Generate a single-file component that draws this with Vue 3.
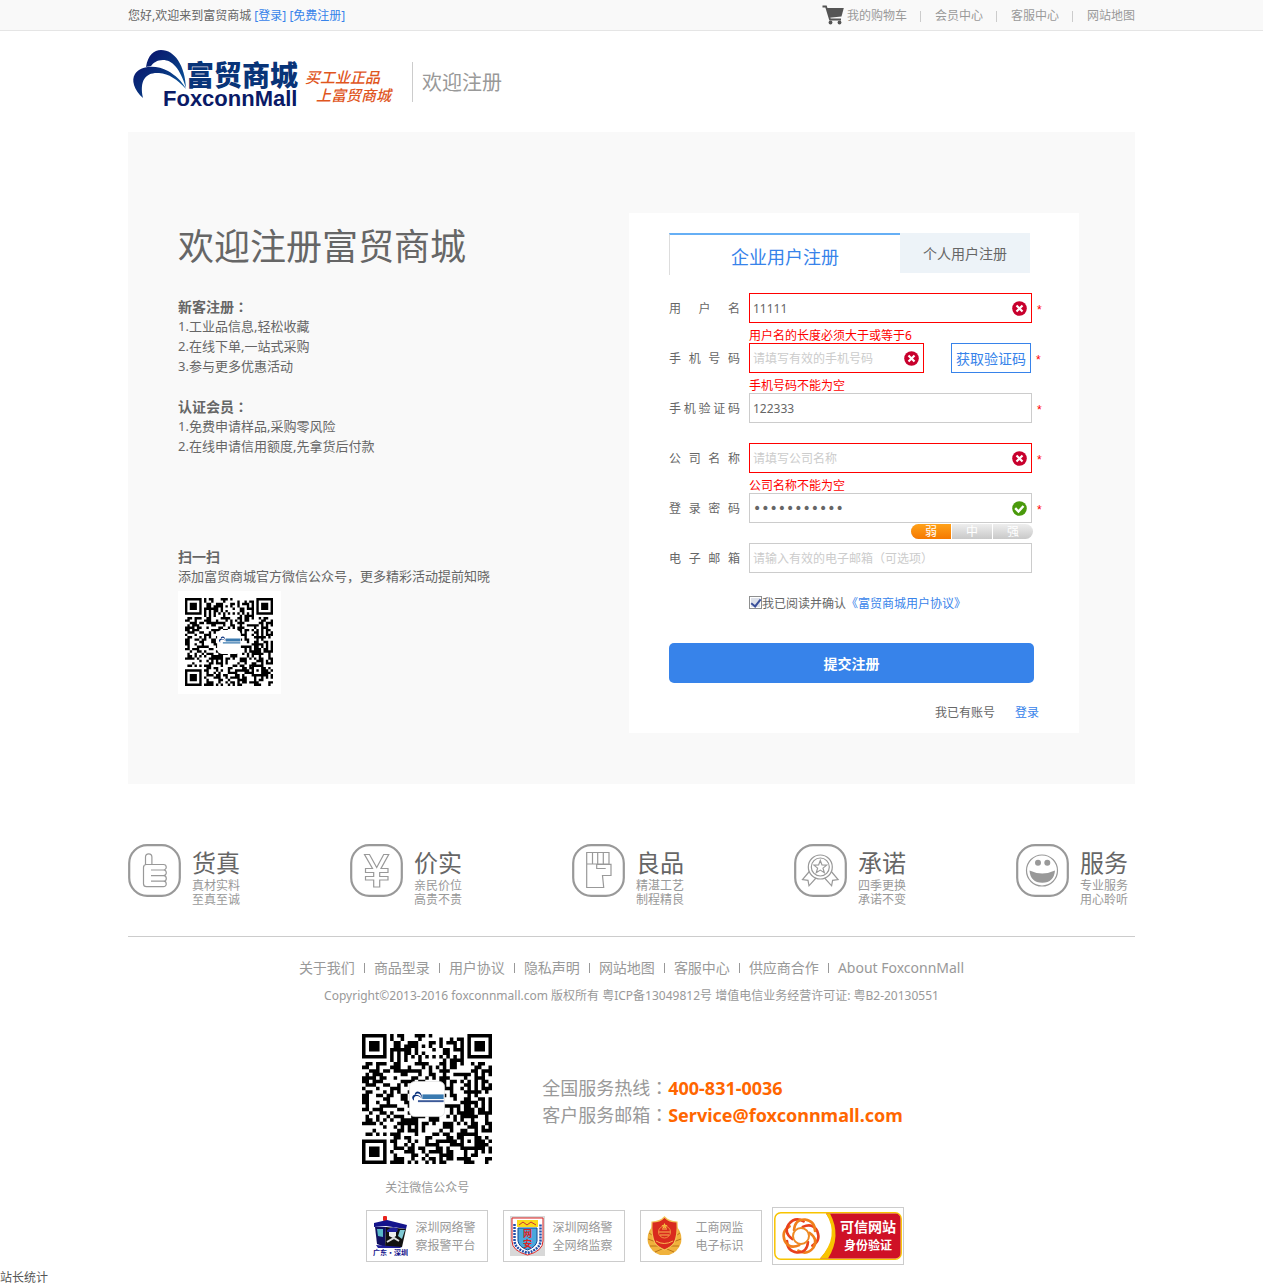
<script setup>
import { ref, reactive } from 'vue'

const topLinks = ['我的购物车', '会员中心', '客服中心', '网站地图']

const fields = reactive([
  { id: 'username', label: '用户名', type: 'text', value: '11111', hint: '', error: '用户名的长度必须大于或等于6', status: 'bad', required: true },
  { id: 'phone', label: '手机号码', type: 'text', value: '', hint: '请填写有效的手机号码', error: '手机号码不能为空', status: 'bad', required: true, code: true },
  { id: 'captcha', label: '手机验证码', type: 'text', value: '122333', hint: '', error: '', status: '', required: true },
  { id: 'company', label: '公司名称', type: 'text', value: '', hint: '请填写公司名称', error: '公司名称不能为空', status: 'bad', required: true },
  { id: 'password', label: '登录密码', type: 'password', value: 'foxconn2016', hint: '', error: '', status: 'good', required: true, strength: true },
  { id: 'email', label: '电子邮箱', type: 'text', value: '', hint: '请输入有效的电子邮箱（可选项）', error: '', status: '', required: false }
])

const agreed = ref(true)

const features = [
  {
    title: '货真', lines: ['真材实料', '至真至诚'],
    paths: ['M17.5 20.5V13a3.2 3.2 0 0 1 6.4 0v7.5H35.5a2.7 2.7 0 0 1 0 5.5a2.8 2.8 0 0 1 0 5.6a2.8 2.8 0 0 1 0 5.6a2.7 2.7 0 0 1 0 5.5H18.5a3 3 0 0 1-3-3V23.5a3 3 0 0 1 3-3H24M23 26H36M23 31.6H36M23 37.2H36']
  },
  {
    title: '价实', lines: ['亲民价位', '高贵不贵'],
    paths: ['M14.500 10.500h5L26.700 23.500 33.700 10.500h5L31 24.500h7v4h-8.300v4H38v3.500h-8.300v7h-6v-7h-8.200v-3.500h8.200v-4h-8.200v-4h7z']
  },
  {
    title: '良品', lines: ['精湛工艺', '制程精良'],
    paths: ['M14.700 8.500H37V20H14.700zM20.500 8.500V20M25.700 8.500V20M31.300 8.500V20M14.700 20V43.500H31.700L30.500 31.500H39V20.300H24.700V24.500H33.700']
  },
  {
    title: '承诺', lines: ['四季更换', '承诺不变'],
    paths: [
      'M38.300 23a12 12 0 1 1-24 0a12 12 0 1 1 24 0zM35.300 23a9 9 0 1 1-18 0a9 9 0 1 1 18 0z',
      'M26.300 16.500l1.700 4.400 4.700.2-3.700 3 1.300 4.600-4-2.600-4 2.600 1.300-4.600-3.700-3 4.700-.2z',
      'M15.300 27.500L8.500 35.500l5.500.8 1 5.500 7-7.800M37.300 27.500l6.800 8-5.500.8-1 5.500-7-7.800'
    ]
  },
  {
    title: '服务', lines: ['专业服务', '用心聆听'],
    paths: ['M41.500 26.500a15.500 15.500 0 1 1-31 0a15.500 15.500 0 1 1 31 0z'],
    solid: 'M25 18.700a3 3 0 1 1-6 0a3 3 0 1 1 6 0zM34.300 18.700a3 3 0 1 1-6 0a3 3 0 1 1 6 0zM13.500 26.500q12.700 6 25.500 0q-1 12-12.700 12.300q-12-.3-12.800-12.300z'
  }
]

const footLinks = ['关于我们', '商品型录', '用户协议', '隐私声明', '网站地图', '客服中心', '供应商合作', 'About FoxconnMall']

/* 37×37 module grid: finder, alignment and timing patterns plus data cells */
function qrPath() {
  const n = 37
  let seed = 20130551
  const next = () => {
    seed = (seed * 1103515245 + 12345) % 2147483648
    return seed / 2147483648
  }
  const ring = (x, y, cx, cy) => Math.max(Math.abs(x - cx), Math.abs(y - cy))
  let d = ''
  for (let y = 0; y < n; y++) {
    for (let x = 0; x < n; x++) {
      let on = next() < 0.5
      if (x === 6) on = y % 2 === 0
      if (y === 6) on = x % 2 === 0
      const a = ring(x, y, 30, 30)
      if (a <= 2) on = a !== 1
      for (const [cx, cy] of [[3, 3], [33, 3], [3, 33]]) {
        const r = ring(x, y, cx, cy)
        if (r <= 4) on = r === 3 || r <= 1
      }
      if (on) d += `M${x} ${y}h1v1h-1z`
    }
  }
  return d
}
const qr = qrPath()

const arcs = 'M18 20C20 8 26 3 33 3C47 3 57 19 58 41C52 21 44 13 35 13C29 13 25 16 23 19C21 19 19 20 18 20zM15 51C6 43 3 33 7 27C13 18 29 18 40 24C47 28 54 34 58 42C49 32 41 27 31 26C18 25 11 33 15 51z'
</script>

<template>
  <div class="page">
    <div class="topbar">
      <div class="wrap topbar-in">
        <p class="hello">您好,欢迎来到富贸商城 <a href="#">[登录]</a> <a href="#">[免费注册]</a></p>
        <nav class="topnav">
          <a v-for="(t, i) in topLinks" :key="t" href="#">
            <svg v-if="i === 0" class="cart" viewBox="0 0 22 20" width="22" height="20">
              <path d="M.5 1.500H4L8 14.500H19" fill="none" stroke="#555" stroke-width="1.800" />
              <path d="M4.500 3H21.800L19.500 11.500 7.300 12.800z" fill="#555" />
              <circle cx="8.500" cy="17.500" r="1.900" fill="#555" /><circle cx="17.500" cy="17.500" r="1.900" fill="#555" />
            </svg>{{ t }}</a>
        </nav>
      </div>
    </div>

    <header class="wrap header">
      <a href="#" class="logo" aria-label="FoxconnMall">
        <svg viewBox="0 0 270 64" width="270" height="64">
          <defs>
            <linearGradient id="navy" x1="0" y1="0" x2="1" y2="1">
              <stop offset="0" stop-color="#0a0a66" /><stop offset=".5" stop-color="#08307c" /><stop offset="1" stop-color="#0b62a8" />
            </linearGradient>
          </defs>
          <path :d="arcs" fill="url(#navy)" />
          <text x="58" y="39" class="logo-cn">富贸商城</text>
          <text x="35" y="59" class="logo-en">FoxconnMall</text>
          <text x="177" y="36" class="slogan">买工业正品</text>
          <text x="188" y="54" class="slogan">上富贸商城</text>
        </svg>
      </a>
      <h2>欢迎注册</h2>
    </header>

    <main class="wrap panel">
      <section class="intro">
        <h1>欢迎注册富贸商城</h1>
        <h3>新客注册<span class="mid">：</span></h3>
        <p>1.工业品信息,轻松收藏</p>
        <p>2.在线下单,一站式采购</p>
        <p>3.参与更多优惠活动</p>
        <h3 class="second">认证会员<span class="mid">：</span></h3>
        <p>1.免费申请样品,采购零风险</p>
        <p>2.在线申请信用额度,先拿货后付款</p>
        <h3 class="scan">扫一扫</h3>
        <p>添加富贸商城官方微信公众号，更多精彩活动提前知晓</p>
        <div class="qr-small">
          <svg viewBox="0 0 37 37" width="88" height="88">
            <path :d="qr" />
            <rect x="13.500" y="13.500" width="10" height="10" rx="2" fill="#fff" />
            <g transform="translate(14 16) scale(.055)">
              <path :d="arcs" fill="#08307c" /><path d="M58 18H168V42H58zM35 48H168V56H35z" fill="#3a7ab0" />
            </g>
          </svg>
        </div>
      </section>

      <form class="card" @submit.prevent>
        <div class="tabs">
          <button type="button" class="tab on">企业用户注册</button>
          <button type="button" class="tab">个人用户注册</button>
        </div>

        <div v-for="f in fields" :key="f.id" class="row">
          <label :for="f.id">{{ f.label }}</label>
          <div class="line">
            <div class="box" :class="[f.status, { short: f.code }]">
              <input :id="f.id" v-model="f.value" :type="f.type" :placeholder="f.hint" autocomplete="off" />
              <svg v-if="f.status" class="mark" viewBox="0 0 15 15" width="15" height="15">
                <circle cx="7.500" cy="7.500" r="7.300" :fill="f.status === 'bad' ? '#c8002d' : '#4a9a0c'" />
                <path v-if="f.status === 'bad'" d="M4.500 4.500l6 6M10.500 4.500l-6 6" stroke="#fff" stroke-width="2.200" fill="none" />
                <path v-else d="M3.200 7.200l3.300 3.300 5-5.500" stroke="#fff" stroke-width="2.400" fill="none" />
              </svg>
            </div>
            <button v-if="f.code" type="button" class="get-code">获取验证码</button>
            <span v-if="f.required" class="star">*</span>
          </div>
          <p v-if="f.error" class="error">{{ f.error }}</p>
          <div v-if="f.strength" class="strength"><span class="weak">弱</span><span>中</span><span>强</span></div>
        </div>

        <div class="agree">
          <input id="agree" v-model="agreed" type="checkbox" /><label for="agree">我已阅读并确认</label><a href="#">《富贸商城用户协议》</a>
        </div>
        <button type="submit" class="submit">提交注册</button>
        <p class="have">我已有账号<a href="#">登录</a></p>
      </form>
    </main>

    <section class="wrap features">
      <div v-for="f in features" :key="f.title" class="feature">
        <svg viewBox="0 0 53 53" width="53" height="53">
          <rect x="1.200" y="1.200" width="50.600" height="50.600" rx="18" fill="none" stroke="#999" stroke-width="2.200" />
          <path v-for="p in f.paths" :key="p" :d="p" fill="none" stroke="#999" stroke-width="1.200" />
          <path v-if="f.solid" :d="f.solid" fill="#999" />
        </svg>
        <div>
          <h4>{{ f.title }}</h4>
          <p v-for="l in f.lines" :key="l">{{ l }}</p>
        </div>
      </div>
    </section>

    <footer>
      <nav class="footnav"><a v-for="l in footLinks" :key="l" href="#">{{ l }}</a></nav>
      <p class="copy">Copyright©2013-2016 foxconnmall.com 版权所有 粤ICP备13049812号 增值电信业务经营许可证: 粤B2-20130551</p>

      <div class="contact">
        <div class="follow">
          <svg viewBox="0 0 37 37" width="130" height="130">
            <path :d="qr" />
            <rect x="13.500" y="13.500" width="10" height="10" rx="1.500" fill="#fff" stroke="#ddd" stroke-width=".2" />
            <g transform="translate(14 16.200) scale(.055)">
              <path :d="arcs" fill="#08307c" />
              <path d="M58 18H168V42H58z" fill="#3a7ab0" /><path d="M35 48H168V58H35z" fill="#3c5a98" />
            </g>
          </svg>
          <p>关注微信公众号</p>
        </div>
        <div class="hotline">
          <p>全国服务热线<span class="mid">：</span><b>400-831-0036</b></p>
          <p>客户服务邮箱<span class="mid">：</span><b>Service@foxconnmall.com</b></p>
        </div>
      </div>

      <div class="badges">
        <a href="#" class="badge">
          <svg viewBox="0 0 35 40" width="35" height="40">
            <rect x="10" y="0" width="4" height="5" rx="1" fill="#e8231c" />
            <path d="M1 7L14 4 34 9 33 13 13 10 1 11z" fill="#14148c" />
            <path d="M2 11L13 11 12 31 4 28z" fill="#101060" /><path d="M4 13l6 0 0 8-5-1z" fill="#58b8c8" />
            <path d="M13 11L33 13 29 31 12 31z" fill="#111" /><path d="M27 14l5 0-3 9-4-3z" fill="#7fc8d4" />
            <path d="M14 14q6-5 11-1l-1 3H14z" fill="#20209a" /><path d="M16 16h7v4l-3 2-4-2z" fill="#eee" />
            <path d="M14 26l7-4 5 3" fill="none" stroke="#ddd" stroke-width="2" />
            <path d="M3 29l26 2-2 1H5z" fill="#20209a" />
            <text x="0" y="39" class="tiny-navy">广东·深圳</text>
          </svg>
          <span>深圳网络警<br />察报警平台</span>
        </a>
        <a href="#" class="badge">
          <svg viewBox="0 0 35 40" width="35" height="40">
            <rect width="35" height="40" fill="#d8d8d8" />
            <path d="M2 2H33V25Q33 35 17.500 39Q2 35 2 25z" fill="#fff" stroke="#d22" stroke-width="1" />
            <path d="M4.500 8V25Q5 33 17.500 37Q30 33 30.500 25V8" fill="none" stroke="#2350a8" stroke-width="2.500" stroke-dasharray="2 1" />
            <rect x="7" y="4" width="21" height="7" fill="#fbdc18" /><path d="M9 9l4-3 4 3 4-3 5 3" fill="none" stroke="#c33" />
            <path d="M8 12H27V25Q26 31 17.500 34Q9 31 8 25z" fill="#4aa8dc" stroke="#124a94" />
            <text x="13" y="21" class="tiny-red">网</text><text x="13" y="31" class="tiny-red">安</text>
          </svg>
          <span>深圳网络警<br />全网络监察</span>
        </a>
        <a href="#" class="badge gap">
          <svg viewBox="0 0 35 40" width="35" height="40">
            <path d="M7 9Q-1 16 1 27Q4 36 13 39H22Q31 36 34 27Q36 16 28 9z" fill="#f0b23c" />
            <path d="M2 17l6 4M1 23l8 3M3 30l8 0M8 36l7-3M33 17l-6 4M34 23l-8 3M32 30l-8 0M27 36l-7-3" stroke="#b8741a" fill="none" />
            <path d="M17.500 1Q22 6 30 6Q31 20 27 27Q24 31 17.500 34Q11 31 8 27Q4 20 5 6Q13 6 17.500 1z" fill="#d92a1e" stroke="#f4c55a" stroke-width="1.200" />
            <path d="M17.500 7l1 2 2 0-1.500 1.500.5 2-2-1-2 1 .5-2L14.500 9l2 0z" fill="#f8c840" />
            <circle cx="17.500" cy="16" r="6" fill="none" stroke="#f09040" /><path d="M12 16h11M13 19h9M15 13h5M9 25q8 5 17 0" stroke="#f8b850" fill="none" />
          </svg>
          <span>工商网监<br />电子标识</span>
        </a>
        <a href="#" class="badge trust">
          <svg viewBox="0 0 128 48" width="128" height="48">
            <rect x=".8" y=".8" width="126.400" height="46.400" rx="6" fill="#fff" stroke="#f8c400" stroke-width="1.500" />
            <path d="M52 1.500H121a5 5 0 0 1 5.500 5V41a5 5 0 0 1-5.500 5.500H46Q68 24 52 1.500z" fill="#cf1126" />
            <path d="M52 1.500Q66 24 46 46.500H54Q68 24 56 1.500z" fill="#f8c400" />
            <g fill="none" stroke-width="2.600" stroke-linecap="round">
              <path v-for="a in 6" :key="a" d="M20 18Q21 7 31 7.500Q41 9 41 19" :transform="`rotate(${a * 60} 27 24)`" :stroke="a % 2 ? '#e8401c' : '#f0801c'" />
            </g>
            <circle cx="27" cy="24" r="8" fill="#fff" stroke="#ee8a24" stroke-width="2" />
            <text x="66" y="20" class="trust-a">可信网站</text><text x="70" y="38" class="trust-b">身份验证</text>
          </svg>
        </a>
      </div>
    </footer>
    <a href="#" class="stat">站长统计</a>
  </div>
</template>

<style>
body { margin: 0; background: #fff; }
</style>

<style scoped>
.page, .page button, .page input { font-family: "Noto Sans", "Noto Sans CJK SC", sans-serif; }
.page { font-size: 12px; line-height: 20px; color: #666; }
.page * { box-sizing: border-box; }
p, h1, h2, h3, h4 { margin: 0; }
a { color: #3783ea; text-decoration: none; }
svg { display: block; flex: none; }
button { padding: 0; cursor: pointer; }
.wrap { max-width: 1007px; margin: 0 auto; }
.mid { font-family: "Noto Sans CJK TC", sans-serif; line-height: 1; }

.topbar { background: #f9f9f9; border-bottom: 1px solid #e5e5e5; }
.topbar-in { display: flex; justify-content: space-between; align-items: center; height: 30px; padding-top: 2px; }
.topnav { display: flex; align-items: center; }
.topnav a { display: flex; align-items: center; color: #999; }
.topnav a + a::before { content: ""; width: 1px; height: 11px; margin: 0 14px 0 13px; background: #ccc; }
.cart { margin: 0 3px 2px 0; }

.header { display: flex; align-items: center; height: 101px; }
.logo { margin: 0 14px 6px 0; }
.header h2 { height: 40px; padding-left: 9px; border-left: 1px solid #ccc; font-size: 20px; font-weight: 400; line-height: 42px; color: #999; }
.logo-cn { font: 900 28px "Noto Sans CJK SC", sans-serif; fill: #083478; }
.logo-en { font: 700 22px "Liberation Sans", sans-serif; fill: #0a1a66; }
.slogan { font: italic 500 15px "Noto Sans CJK SC", sans-serif; fill: #e0561e; }

.panel { display: flex; justify-content: space-between; align-items: flex-start; padding: 81px 56px 51px 50px; background: #f9f9f9; }
.intro h1 { margin: 9px 0 25px; font-size: 36px; line-height: 50px; font-weight: 400; }
.intro h3 { font-size: 14px; line-height: 20px; font-weight: 700; }
.intro p { padding-bottom: 2px; font-size: 13px; line-height: 18px; }
.intro .second { margin-top: 20px; }
.intro .scan { margin-top: 90px; }
.qr-small { display: inline-block; margin-top: 4px; padding: 7px 8px 8px 7px; background: #fff; }

.card { width: 450px; padding: 20px 39px 11px 40px; background: #fff; }
.tabs { display: flex; align-items: flex-start; margin-bottom: 18px; }
.tab { width: 130px; height: 40px; border: 0; background: #edf3f8; color: #666; font-size: 14px; }
.tab.on { width: 231px; height: 42px; padding-top: 2px; border-top: 2px solid #66aff5; border-left: 1px solid #ddd; background: #fff; color: #3783ea; font-size: 18px; }
.row { display: grid; grid-template-columns: 71px 1fr; column-gap: 9px; grid-template-rows: 30px 20px; }
.row label { line-height: 32px; text-align: justify; text-align-last: justify; }
.line { display: flex; align-items: center; }
.box { display: flex; align-items: center; width: 283px; height: 30px; padding-right: 4px; border: 1px solid #ccc; background: #fff; }
.box.short { width: 175px; }
.box.bad { border-color: #f00; }
.box input { flex: 1; min-width: 0; height: 28px; padding: 0 3px; border: 0; outline: 0; background: none; color: #666; font-size: 12px; }
.box input[type="password"] { font-family: "DejaVu Sans", sans-serif; font-size: 14px; }
.box input::placeholder { color: #ccc; }
.get-code { width: 80px; height: 30px; margin-left: 27px; border: 1px solid #3783ea; background: #fff; color: #3783ea; font-size: 14px; }
.star { margin-left: 5px; padding-top: 4px; color: #f00; font-family: "Liberation Sans", sans-serif; }
.error { grid-column: 2; padding-top: 5px; line-height: 16px; color: #f00; }
.strength { grid-column: 2; display: flex; width: 122px; height: 15px; margin: 1px 0 0 162px; border-radius: 8px; overflow: hidden; background: linear-gradient(#eee, #c8c8c8); }
.strength span { flex: 1; line-height: 15px; text-align: center; color: #fff; }
.strength span + span { border-left: 1px solid #fff; }
.strength .weak { background: linear-gradient(#ffa21a, #f57800); }
.agree { display: flex; align-items: center; height: 20px; margin: 0 0 30px 80px; padding-top: 2px; }
.agree input { appearance: none; display: flex; justify-content: center; width: 13px; height: 13px; margin: 0 0 4px; border: 1px solid #8e8f8f; background: #dde1ea; box-shadow: inset 0 0 0 1px #fff; }
.agree input:checked::after { content: ""; width: 4px; height: 8px; border: solid #3a4f9a; border-width: 0 2px 2px 0; transform: rotate(38deg); }
.submit { display: block; width: 365px; height: 40px; border: 0; border-radius: 5px; background: #3783ea; color: #fff; font-size: 14px; font-weight: 700; }
.have { padding: 20px 1px 0 0; line-height: 19px; text-align: right; }
.have a { margin-left: 20px; }

.features { display: flex; justify-content: space-between; padding: 60px 0 29px; border-bottom: 1px solid #ccc; }
.feature { display: flex; gap: 11px; padding-right: 7px; }
.feature:not(:last-child) { width: 119px; }
.feature h4 { margin-top: 5px; padding-bottom: 2px; font-size: 24px; font-weight: 400; line-height: 28px; }
.feature p { line-height: 14px; color: #999; }

footer { color: #999; }
.footnav { display: flex; justify-content: center; padding-top: 21px; font-size: 14px; }
.footnav a { display: flex; align-items: center; color: #999; }
.footnav a + a::before { content: ""; width: 1px; height: 10px; margin: 0 9px; background: #999; }
.copy { margin-top: 8px; text-align: center; }
.contact { display: flex; justify-content: center; gap: 50px; margin-top: 28px; padding-left: 2px; }
.follow p { margin-top: 14px; text-align: center; }
.hotline { padding-top: 41px; font-size: 18px; line-height: 27px; }
.hotline b { color: #f60; }
.badges { display: flex; justify-content: center; align-items: center; gap: 15px; margin-top: 9px; padding-left: 6px; }
.badge { display: flex; align-items: center; gap: 8px; width: 122px; height: 52px; padding-left: 6px; border: 1px solid #ccc; color: #999; line-height: 18px; }
.badge span { padding-top: 2px; }
.badge.gap { gap: 14px; }
.badge.trust { width: 132px; height: 58px; margin-left: -5px; padding-left: 1px; }
.tiny-navy { font: 700 7px "Noto Sans CJK SC", sans-serif; fill: #14148c; }
.tiny-red { font: 700 9px "Noto Sans CJK SC", sans-serif; fill: #d22; }
.trust-a { font: 700 14px "Noto Sans CJK SC", sans-serif; fill: #fff; }
.trust-b { font: 700 12px "Noto Sans CJK SC", sans-serif; fill: #fff; }
.stat { display: block; width: 48px; margin-top: 4px; line-height: 17px; color: #555; }
</style>
